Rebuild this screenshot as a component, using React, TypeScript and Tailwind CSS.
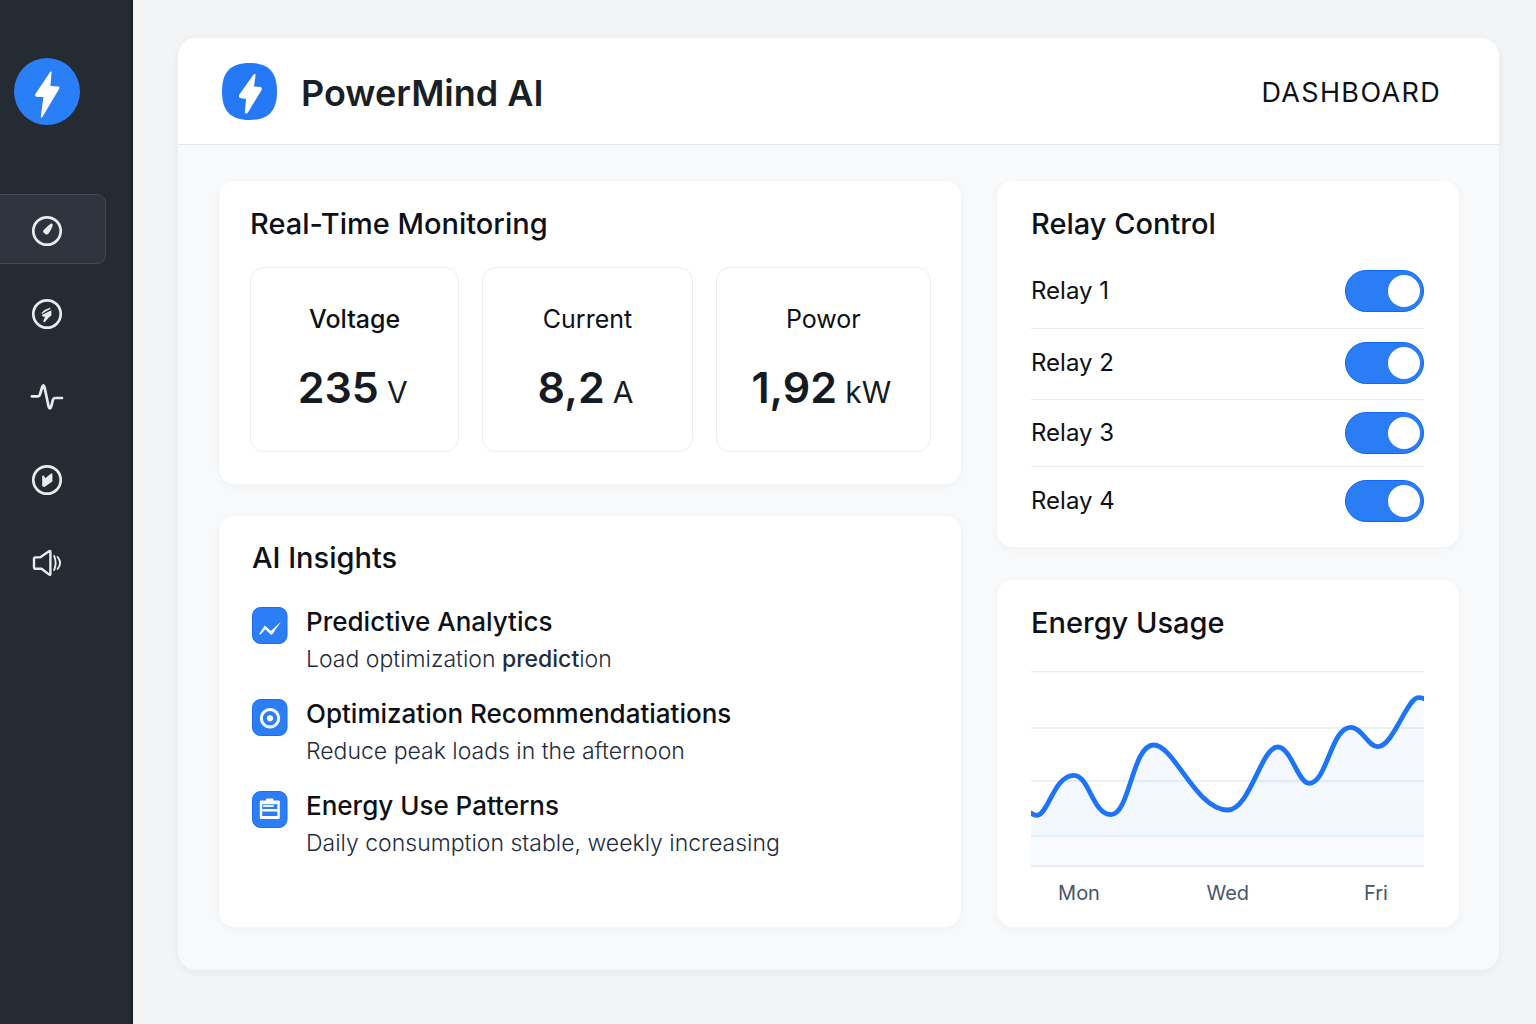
import { useState, type ReactNode } from "react";

const ICON = "#e9eced";

function GaugeIcon() {
  return (
    <svg viewBox="0 0 32 32" className="size-8" fill="none" aria-hidden="true">
      <circle cx="16" cy="16" r="13.7" stroke={ICON} strokeWidth="2.7" />
      <path d="M20.3 8.2 L21.8 9.4 Q21.6 12.5 17.6 18.6 Q16 20.2 14.6 19.2 L12.2 17.2 Q11.6 16.2 12.7 15 Q16 11.2 20.3 8.2Z" fill={ICON} />
    </svg>
  );
}

function BoltCircleIcon() {
  return (
    <svg viewBox="0 0 32 32" className="size-8" fill="none" aria-hidden="true">
      <circle cx="16" cy="16" r="13.7" stroke={ICON} strokeWidth="2.7" />
      <path d="M10.4 15 L13.5 12 L19.6 9.6 L19.2 11 L11 15.8Z" fill={ICON} />
      <path d="M11.2 16.8 L20.4 12.2 V17.4 L17.8 19.4 L13.4 24.4 L12.2 23.6 L14 18.8 L11.4 18.4Z" fill={ICON} />
    </svg>
  );
}

function PulseIcon() {
  return (
    <svg viewBox="0 0 32 32" className="size-8 overflow-visible" fill="none" aria-hidden="true">
      <path
        d="M0.8 15.3 H7 Q8.5 15.3 9.1 13 L11.2 6 Q12.3 2.6 13.5 6 L17.6 25.5 Q18.9 29.4 20.2 25.5 L21.9 18.8 Q22.4 17 24 17 H31"
        stroke={ICON}
        strokeWidth="2.7"
        strokeLinecap="round"
        strokeLinejoin="round"
      />
    </svg>
  );
}

function CompassIcon() {
  return (
    <svg viewBox="0 0 32 32" className="size-8" fill="none" aria-hidden="true">
      <circle cx="16" cy="16" r="13.7" stroke={ICON} strokeWidth="2.7" />
      <path d="M11.2 11.8 L12.8 11.4 L14.2 14.2 L20.4 9.2 L21.4 9.8 V17.6 L13.4 23 L11.2 22.2Z" fill={ICON} />
    </svg>
  );
}

function SpeakerIcon() {
  return (
    <svg viewBox="0 0 32 32" className="size-8" fill="none" stroke={ICON} strokeWidth="2.4" strokeLinejoin="round" strokeLinecap="round" aria-hidden="true">
      <path d="M4.4 10.4 H9 L18.4 4 Q19.4 3.6 19.4 4.8 V27 Q19.4 28.4 18.2 27.6 L10.6 21.8 H4.6 Q3 21.8 3 20.2 V12 Q3 10.4 4.4 10.4Z" />
      <path d="M23.2 9 Q26 16 23.2 23" strokeWidth="1.9" />
      <path d="M26.6 10 Q31.6 16 26.6 22" strokeWidth="1.9" />
    </svg>
  );
}

function TrendIcon() {
  return (
    <svg viewBox="0 0 36 37" className="h-[37px] w-9 shrink-0" fill="none" aria-hidden="true">
      <rect x="0.5" y="0.5" width="34.5" height="36" rx="8" fill="#2b7ef6" stroke="#1a6df0" />
      <path d="M7.2 27 L12.8 18.6 L19 24 L29 14.4 L20.6 27 L19 27.8 L13.2 22.2 L8.6 27.6Z" fill="#fff" />
    </svg>
  );
}

function TargetIcon() {
  return (
    <svg viewBox="0 0 36 37" className="h-[37px] w-9 shrink-0" fill="none" aria-hidden="true">
      <rect x="0.5" y="0.5" width="34.5" height="36" rx="8" fill="#2b7ef6" stroke="#1a6df0" />
      <circle cx="18" cy="19.3" r="8.7" stroke="#fff" strokeWidth="3" />
      <circle cx="18" cy="19.3" r="3.1" fill="#fff" />
    </svg>
  );
}

function ClipboardIcon() {
  return (
    <svg viewBox="0 0 36 37" className="h-[37px] w-9 shrink-0" fill="none" aria-hidden="true">
      <rect x="0.5" y="0.5" width="34.5" height="36" rx="8" fill="#2b7ef6" stroke="#1a6df0" />
      <rect x="7.8" y="9.4" width="20" height="18.6" rx="1.2" fill="#fff" />
      <rect x="14" y="7.6" width="7.4" height="3" rx="1" fill="#fff" />
      <path d="M10.2 13.2 H25.4 V18 H10.2Z M10.2 20.6 H25.4 V25 H10.2Z" fill="#2b7ef6" />
      <path d="M11.2 15 H21.6" stroke="#fff" strokeWidth="1.8" />
    </svg>
  );
}

function RoundLogo() {
  return (
    <svg viewBox="0 0 66 67" className="h-[67px] w-[66px]" aria-hidden="true">
      <ellipse cx="33" cy="33.5" rx="33" ry="33.5" fill="#2a7ff7" />
      <path
        d="M37.6 13.8 L36.4 28 L44.6 28.4 Q46 28.8 45.2 30.8 L28.4 59 Q27 60.4 26.8 58.6 L29.4 39 L22 38.8 Q20.4 38.2 21.4 36 L35.8 14.6 Q37 13 37.6 13.8Z"
        fill="#fff"
      />
    </svg>
  );
}

function SquircleLogo() {
  return (
    <svg viewBox="0 0 55 57" className="h-[57px] w-[55px]" aria-hidden="true">
      <path d="M27.5 0 C46.5 0 55 9 55 28.5 C55 48 46.5 57 27.5 57 C8.5 57 0 48 0 28.5 C0 9 8.5 0 27.5 0Z" fill="#2579f6" />
      <path
        d="M33 11 Q33.8 11 33.4 13.6 L32 23.4 L38.8 24 Q40.4 24.6 39.6 27 L25.6 50 Q23.6 51.6 22.8 49.6 L24 36 L18 35 Q16.4 34.4 17.2 31.8 L31.2 12 Q32.2 10.8 33 11Z"
        fill="#fff"
      />
    </svg>
  );
}

const navItems: { label: string; icon: ReactNode }[] = [
  { label: "Overview", icon: <GaugeIcon /> },
  { label: "Power", icon: <BoltCircleIcon /> },
  { label: "Activity", icon: <PulseIcon /> },
  { label: "Explore", icon: <CompassIcon /> },
  { label: "Sound", icon: <SpeakerIcon /> },
];

function Sidebar() {
  const [active, setActive] = useState("Overview");
  return (
    <aside className="w-[133px] shrink-0 border-r-2 border-[#1b2027] bg-[#252b33] pt-[58px]">
      <div className="pl-3.5">
        <RoundLogo />
      </div>
      <nav className="mt-[69px] flex flex-col gap-[13px]" aria-label="Main">
        {navItems.map((item) => (
          <button
            key={item.label}
            type="button"
            aria-label={item.label}
            aria-current={active === item.label ? "page" : undefined}
            onClick={() => setActive(item.label)}
            className={
              active === item.label
                ? "flex h-[70px] w-[106px] items-center rounded-r-[9px] border border-l-0 border-[#434a53] bg-[#2e343d] pt-1 pl-[31px]"
                : "flex h-[70px] w-[106px] items-center rounded-r-[9px] border border-l-0 border-transparent pt-1 pl-[31px]"
            }
          >
            {item.icon}
          </button>
        ))}
      </nav>
    </aside>
  );
}

function CardTitle({ children }: { children: ReactNode }) {
  return <h2 className="text-[29px] leading-9 font-medium text-[#0d1117]">{children}</h2>;
}

const metrics = [
  { label: "Voltage", value: "235", unit: "V", strong: true },
  { label: "Current", value: "8,2", unit: "A", strong: false },
  { label: "Powor", value: "1,92", unit: "kW", strong: false },
];

function Monitoring() {
  return (
    <section className="rounded-2xl bg-white pt-[25px] pr-[30px] pb-8 pl-[31px] shadow-[0_2px_8px_rgba(30,41,59,0.04)]">
      <CardTitle>Real-Time Monitoring</CardTitle>
      <div className="mt-[25px] grid grid-cols-[209fr_210fr_215fr] gap-[23px]">
        {metrics.map((m) => (
          <div key={m.label} className="flex h-[185px] flex-col items-center rounded-[14px] border border-[#e9eff5] pt-[35px]">
            <p className={m.strong ? "text-[25px] leading-8 font-medium text-[#0d1117]" : "text-[25px] leading-8 text-[#0d1117]"}>{m.label}</p>
            <p className="mt-6 flex items-baseline gap-2 pr-1 leading-[56px] text-[#161b22]">
              <span className="text-[43px] font-semibold">{m.value}</span>
              <span className="text-[30px]">{m.unit}</span>
            </p>
          </div>
        ))}
      </div>
    </section>
  );
}

const insights: { icon: ReactNode; title: string; text: ReactNode }[] = [
  {
    icon: <TrendIcon />,
    title: "Predictive Analytics",
    text: (
      <>
        Load optimization <span className="font-medium">predict</span>ion
      </>
    ),
  },
  { icon: <TargetIcon />, title: "Optimization Recommendatiations", text: "Reduce peak loads in the afternoon" },
  { icon: <ClipboardIcon />, title: "Energy Use Patterns", text: "Daily consumption stable, weekly increasing" },
];

function Insights() {
  return (
    <section className="flex-1 rounded-2xl bg-white pt-6 pr-[30px] pb-8 pl-[33px] shadow-[0_2px_8px_rgba(30,41,59,0.04)]">
      <CardTitle>AI Insights</CardTitle>
      <ul className="mt-[31px] flex flex-col gap-[25px]">
        {insights.map((item) => (
          <li key={item.title} className="flex gap-[18px]">
            {item.icon}
            <div>
              <h3 className="text-[26px] leading-[30px] font-medium text-[#0d1117]">{item.title}</h3>
              <p className="mt-[7px] text-[23px] leading-[30px] font-light text-[#1f2c3f]">{item.text}</p>
            </div>
          </li>
        ))}
      </ul>
    </section>
  );
}

const relays = [
  { name: "Relay 1", row: "border-b pb-4" },
  { name: "Relay 2", row: "border-b pt-[13px] pb-[15px]" },
  { name: "Relay 3", row: "border-b pt-3 pb-3" },
  { name: "Relay 4", row: "pt-[13px]" },
];

function Relay({ name, row }: { name: string; row: string }) {
  const [on, setOn] = useState(true);
  return (
    <label className={`flex items-center justify-between border-[#e3eaf2] text-2xl text-[#0d1117] ${row}`}>
      {name}
      <input
        type="checkbox"
        role="switch"
        checked={on}
        onChange={() => setOn(!on)}
        className="flex h-[42px] w-[79px] cursor-pointer appearance-none items-center rounded-full border border-[#cbd5e1] bg-[#cbd5e1] px-[3px] before:size-8 before:rounded-full before:bg-white checked:border-[#1268f3] checked:bg-[#2a7df4] checked:before:ml-auto"
      />
    </label>
  );
}

function RelayControl() {
  return (
    <section className="rounded-2xl bg-white pt-[25px] pr-[35px] pb-[25px] pl-[34px] shadow-[0_2px_8px_rgba(30,41,59,0.04)]">
      <CardTitle>Relay Control</CardTitle>
      <div className="mt-7">
        {relays.map((r) => (
          <Relay key={r.name} name={r.name} row={r.row} />
        ))}
      </div>
    </section>
  );
}

const usageCurve =
  "M-1 141 C1 143.6 3 144.3 6 144.3 C17 144.3 23 104.3 43 104.3 C58 104.3 62 143.7 79.7 143.7 C99 143.7 101 74 122.7 74 C143 74 165 139 196.7 139 C219 139 230 76 246.7 76 C260 76 267 112.3 278 112.3 C296 112.3 300 56.3 319.7 56.3 C331 56.3 337 75.7 346.7 75.7 C362 75.7 376 26.7 387.3 26.7 C390 26.7 392 27 394 28";

const gridLines = [0.5, 57, 110, 165, 195];

function EnergyUsage() {
  return (
    <section className="rounded-2xl bg-white pt-[25px] pr-[35px] pb-5 pl-[34px] shadow-[0_2px_8px_rgba(30,41,59,0.04)]">
      <CardTitle>Energy Usage</CardTitle>
      <svg viewBox="0 0 393 196" preserveAspectRatio="none" className="mt-[30px] h-[196px] w-full" fill="none" role="img" aria-label="Energy usage from Monday to Friday">
        <defs>
          <linearGradient id="usage-fill" x1="0" y1="27" x2="0" y2="196" gradientUnits="userSpaceOnUse">
            <stop offset="0" stopColor="#3b82f6" stopOpacity="0.04" />
            <stop offset="0.81" stopColor="#3b82f6" stopOpacity="0.065" />
            <stop offset="0.82" stopColor="#3b82f6" stopOpacity="0.035" />
            <stop offset="1" stopColor="#3b82f6" stopOpacity="0.03" />
          </linearGradient>
        </defs>
        {gridLines.map((y) => (
          <path key={y} d={`M0 ${y} H393`} stroke="#e4ebf4" strokeWidth="1.4" />
        ))}
        <path d={`${usageCurve} V196 H-1Z`} fill="url(#usage-fill)" />
        <path d={usageCurve} stroke="#1d74f8" strokeWidth="4.8" />
      </svg>
      <div className="mt-3 flex justify-between px-[27px] text-xl leading-7 text-[#475569]">
        {["Mon", "Wed", "Fri"].map((day) => (
          <span key={day} className="w-[42px] text-center">
            {day}
          </span>
        ))}
      </div>
    </section>
  );
}

export default function App() {
  return (
    <div className="flex min-h-screen bg-[#f3f4f6] font-[Inter,sans-serif] antialiased">
      <Sidebar />
      <main className="min-w-0 flex-1 pt-[38px] pr-[37px] pb-[54px] pl-[45px]">
        <div className="overflow-hidden rounded-[18px] bg-[#f8f9fb] shadow-[0_2px_8px_rgba(30,41,59,0.06)]">
          <header className="flex h-[107px] items-center justify-between border-b border-[#e4e8ed] bg-white pr-[58px] pl-11">
            <div className="flex items-center gap-6">
              <SquircleLogo />
              <h1 className="pt-1 text-[36px] leading-[48px] font-semibold text-[#1a1e25]">PowerMind AI</h1>
            </div>
            <span className="pt-1 text-[27px] leading-9 tracking-wider text-[#0d1117]">DASHBOARD</span>
          </header>
          <div className="grid grid-cols-[742fr_462fr] gap-9 pt-9 pr-10 pb-[43px] pl-[41px]">
            <div className="flex flex-col gap-8">
              <Monitoring />
              <Insights />
            </div>
            <div className="flex flex-col gap-[33px]">
              <RelayControl />
              <EnergyUsage />
            </div>
          </div>
        </div>
      </main>
    </div>
  );
}
